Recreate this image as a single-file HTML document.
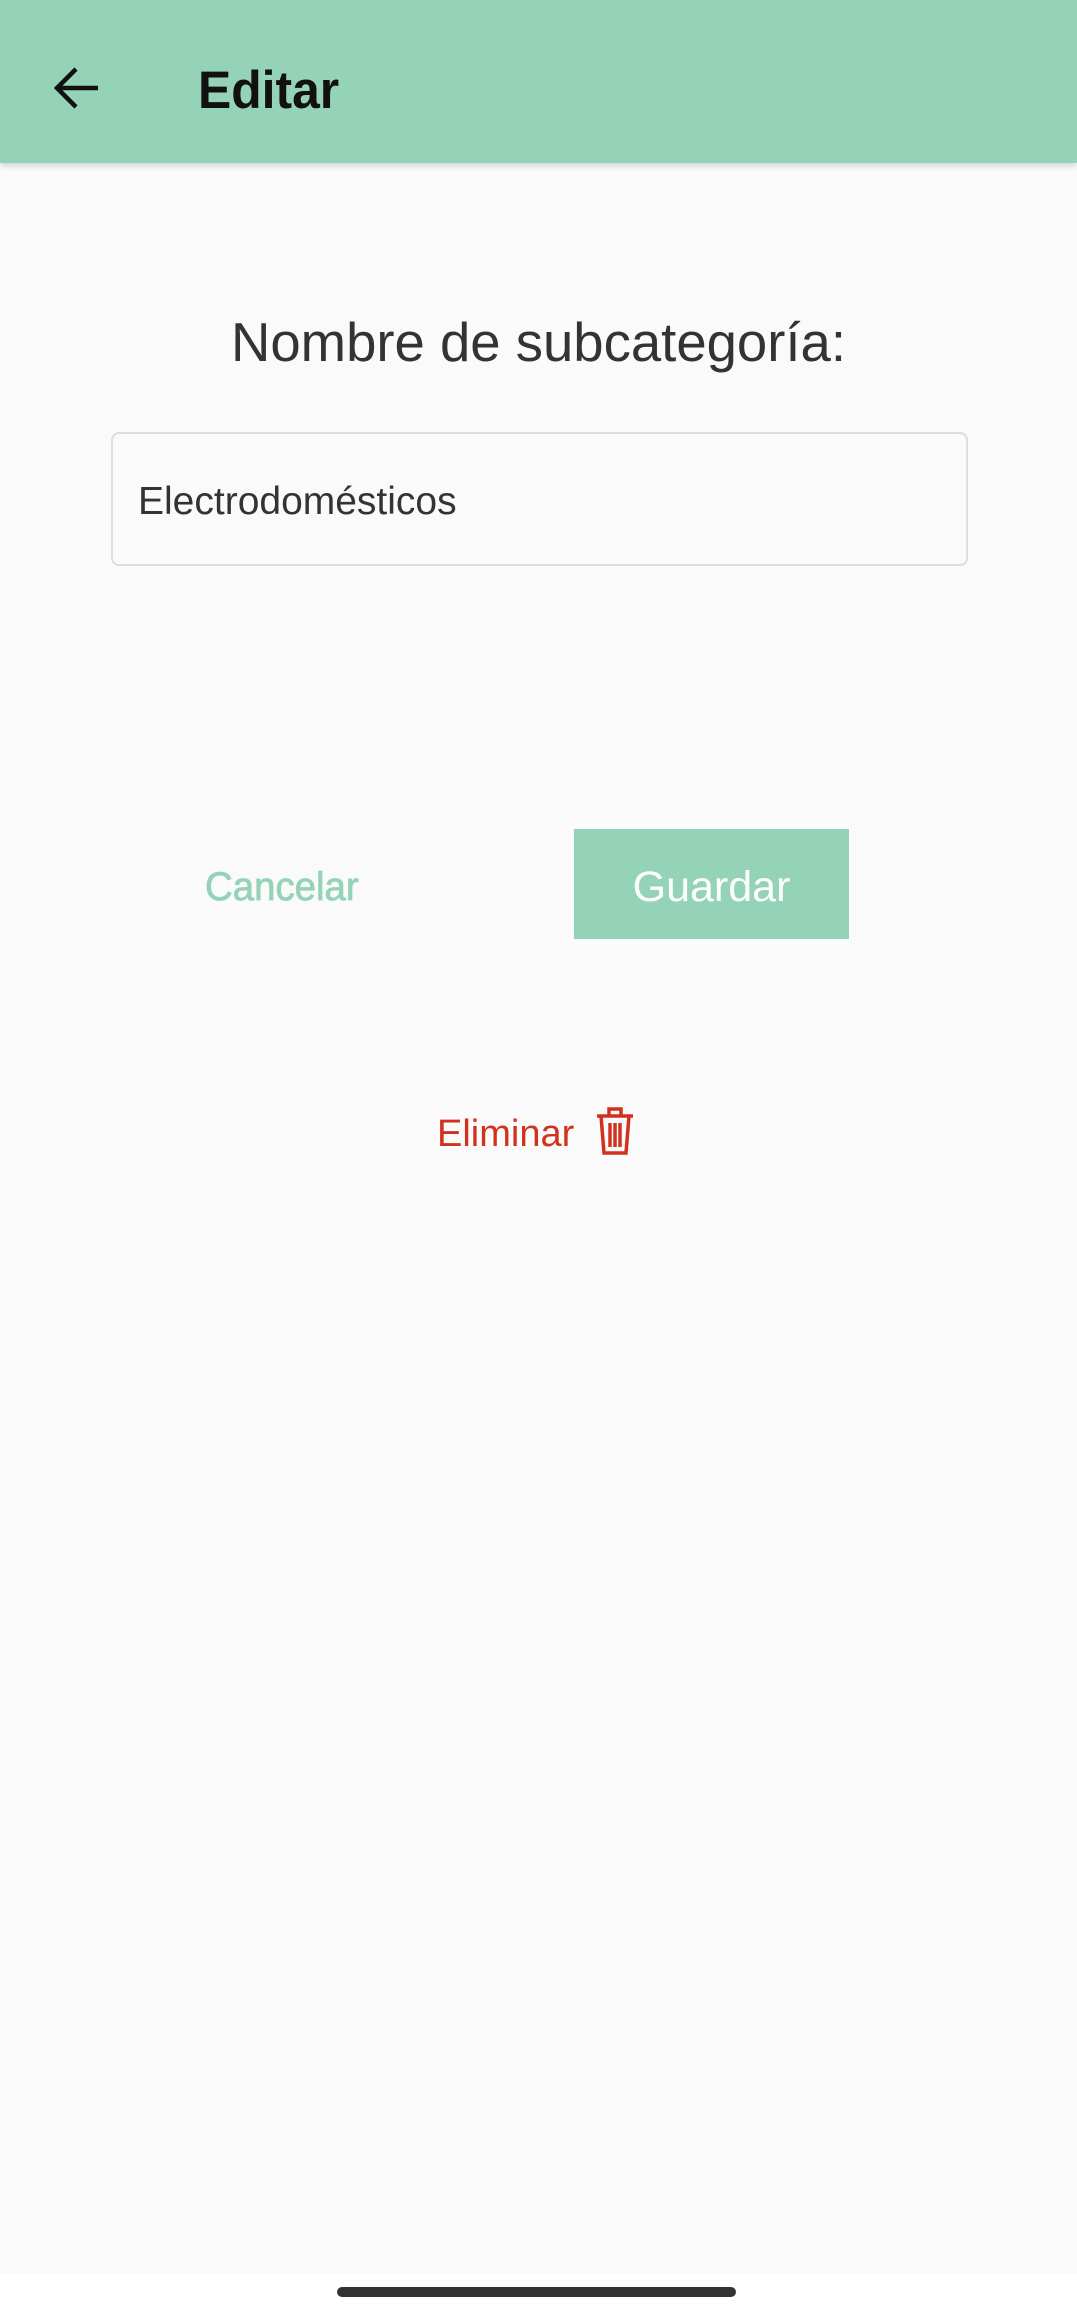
<!DOCTYPE html>
<html><head><meta charset="utf-8"><style>
body{margin:0;width:1077px;height:2317px;background:#fff;font-family:"Liberation Sans",Roboto,sans-serif;position:relative;overflow:hidden}
.bg{position:absolute;left:0;top:0;width:1077px;height:2273px;background:#fafafa}
.hdr{position:absolute;left:0;top:0;width:1077px;height:163px;background:#95d3b8;box-shadow:0 3px 6px rgba(0,0,0,.15)}
.t{position:absolute;white-space:nowrap}
</style></head><body>
<div class="bg"></div>
<div class="hdr"></div>
<svg style="position:absolute;left:52px;top:64px" width="50" height="48" viewBox="0 0 50 48"><path d="M46 24H6M24 5L5 24l19 19" fill="none" stroke="#111" stroke-width="4.5"/></svg>
<div class="t" style="left:198px;top:61px;font-size:53px;line-height:60px;color:#111;font-weight:bold;transform:scaleX(.94);transform-origin:left">Editar</div>
<div class="t" style="left:0;width:1077px;text-align:center;top:311px;font-size:54.5px;line-height:64px;color:#333">Nombre de subcategoría:</div>
<div style="position:absolute;left:111px;top:432px;width:853px;height:130px;border:2px solid #ddd;border-radius:8px"></div>
<div class="t" style="left:138px;top:479px;font-size:39px;line-height:46px;color:#333">Electrodomésticos</div>
<div class="t" style="left:205px;top:862px;font-size:40px;line-height:50px;color:#95d3b8;transform:scaleX(.96);transform-origin:left;-webkit-text-stroke:0.8px #95d3b8">Cancelar</div>
<div style="position:absolute;left:574px;top:829px;width:275px;height:110px;background:#95d3b8"></div>
<div class="t" style="left:574px;width:275px;text-align:center;top:861px;font-size:43px;line-height:52px;color:#fff">Guardar</div>
<div class="t" style="left:437px;top:1111px;font-size:38px;line-height:46px;color:#d0321e">Eliminar</div>
<svg style="position:absolute;left:595px;top:1106px" width="40" height="50" viewBox="0 0 40 50"><g fill="none" stroke="#d0321e" stroke-width="3.5"><path d="M2 10H38M14 10V3h12v7M6 10l3 37h22l3-37M15 17v24M20 17v24M25 17v24"/></g></svg>
<div style="position:absolute;left:337px;top:2287px;width:399px;height:10px;border-radius:5px;background:#333"></div>
</body></html>
